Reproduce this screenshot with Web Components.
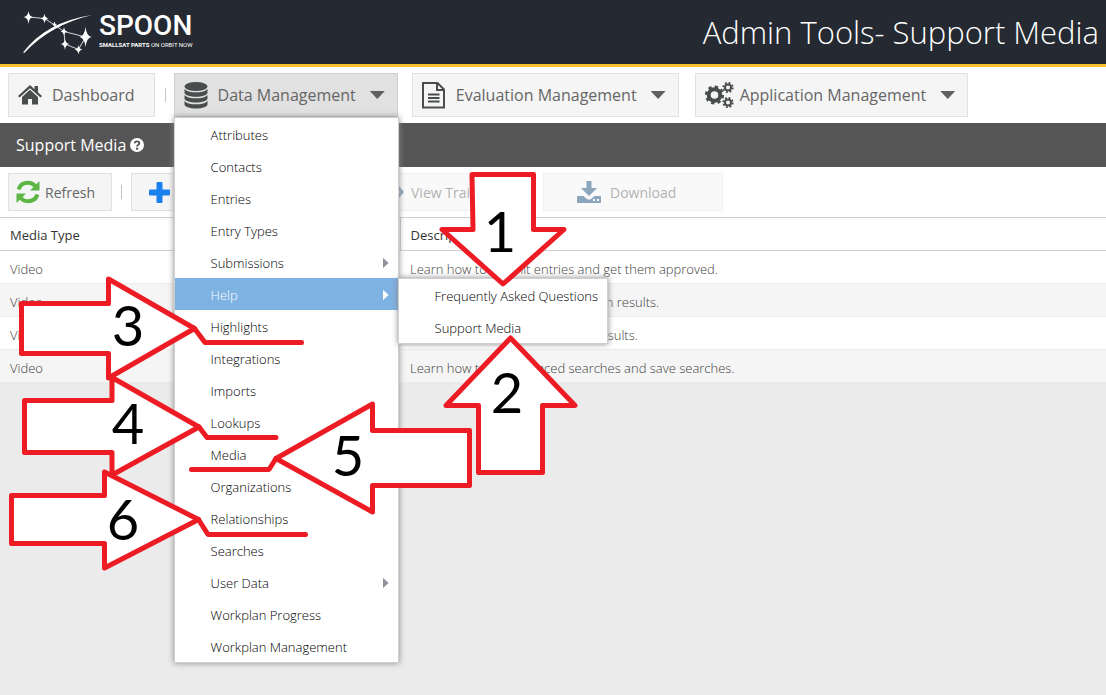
<!DOCTYPE html>
<html lang="en">
<head>
<meta charset="utf-8">
<title>Admin Tools - Support Media</title>
<style>
  html, body { margin: 0; min-height: 100%; background: #ebebeb; }
  body { font: 13px/16px "Open Sans", "Noto Sans", sans-serif; color: #404040; }
</style>
</head>
<body>
<admin-page></admin-page>

<template id="t-page">
  <style>
    :host { display: block; position: relative; min-height: 100vh; }
    nav, .tools { display: flex; align-items: center; background: #fff; }
    nav { height: 56px; padding: 0 8px; position: relative; z-index: 2; }
    .tools { height: 50px; padding: 0 8px; gap: 9px; }
    .sep { width: 1px; height: 14px; background: #c4c4c4; flex: none; }
    nav .sep { margin: 0 8px 0 10px; }
    .anchor { position: relative; margin-right: 14px; }
    .anchor + nav-button { margin-right: 16px; }
  </style>
  <app-header></app-header>
  <nav aria-label="Admin tools">
    <nav-button plain>
      <svg slot="icon" width="24" height="20" viewBox="0 0 24 20" fill="#4a4d4e"><path d="M12 0 0 11l1.500 1.600L12 3.200l10.500 9.400L24 11l-4-3.700V1h-3.500v3.200z"/><path d="M12 4.800 4 12v7.500h6V14h4v5.500h6V12z"/></svg>
      Dashboard</nav-button>
    <span class="sep"></span>
    <div class="anchor">
      <nav-button open>
        <svg slot="icon" width="24" height="27" viewBox="0 0 24 27" fill="#4a4d4e"><ellipse cx="12" cy="4.500" rx="11.500" ry="4.500"/><path d="M.5 7c2 2.500 6.500 3.300 11.500 3.300S21.500 9.500 23.500 7v3.500c0 2.500-5 4.300-11.500 4.300S.5 13 .5 10.500z"/><path d="M.5 13c2 2.500 6.500 3.300 11.500 3.300s9.500-.8 11.500-3.300v3.300c0 2.500-5 4.300-11.500 4.300S.5 18.800.5 16.300z"/><path d="M.5 19c2 2.500 6.500 3.300 11.500 3.300s9.500-.8 11.500-3.300v3.300C23.500 24.800 18.500 26.600 12 26.600S.5 24.800.5 22.300z"/></svg>
        Data Management</nav-button>
      <drop-menu>
        <menu-item>Attributes</menu-item>
        <menu-item>Contacts</menu-item>
        <menu-item>Entries</menu-item>
        <menu-item>Entry Types</menu-item>
        <menu-item more>Submissions</menu-item>
        <menu-item more active>Help
          <drop-menu slot="sub" sub>
            <menu-item>Frequently Asked Questions</menu-item>
            <menu-item>Support Media</menu-item>
          </drop-menu>
        </menu-item>
        <menu-item>Highlights</menu-item>
        <menu-item>Integrations</menu-item>
        <menu-item>Imports</menu-item>
        <menu-item>Lookups</menu-item>
        <menu-item>Media</menu-item>
        <menu-item>Organizations</menu-item>
        <menu-item>Relationships</menu-item>
        <menu-item>Searches</menu-item>
        <menu-item more>User Data</menu-item>
        <menu-item>Workplan Progress</menu-item>
        <menu-item>Workplan Management</menu-item>
      </drop-menu>
    </div>
    <nav-button>
      <svg slot="icon" width="24" height="27" viewBox="0 0 24 27" fill="none" stroke="#4a4d4e" stroke-width="2"><path d="M2 1h13.500L22 7.500V25.500H1V1zM15 1v7h7"/><path d="M6 12.500h11.500M6 16h11.500M6 19.500h11.500"/></svg>
      Evaluation Management</nav-button>
    <nav-button wide-icon>
      <svg slot="icon" width="29" height="26" viewBox="0 0 29 26" fill="none" stroke="#4a4d4e"><circle cx="9.500" cy="13" r="5.800" stroke-width="4"/><circle cx="9.500" cy="13" r="8.300" stroke-width="2.600" stroke-dasharray="3.300 3.220"/><circle cx="23" cy="5.500" r="3" stroke-width="2"/><circle cx="23" cy="5.500" r="4.700" stroke-width="1.800" stroke-dasharray="1.900 1.790"/><circle cx="23" cy="20.500" r="3" stroke-width="2"/><circle cx="23" cy="20.500" r="4.700" stroke-width="1.800" stroke-dasharray="1.900 1.790"/></svg>
      Application Management</nav-button>
  </nav>
  <title-bar>Support Media</title-bar>
  <div class="tools">
    <tool-button style="--w:104px;--gap:5px">
      <svg slot="icon" width="24" height="24" viewBox="0 0 24 24" fill="none" stroke="#5cb646" stroke-width="4"><path d="M2.500 9.500C4 5 8 2.800 12 2.800c3 0 5.500 1.200 7.300 3.200M21.500 14.500c-1.500 4.500-5.500 6.700-9.500 6.700-3 0-5.500-1.200-7.300-3.200"/><path fill="#5cb646" stroke="none" d="M23.500 1v9.500H14zM.5 23v-9.500H10z"/></svg>
      Refresh</tool-button>
    <span class="sep"></span>
    <tool-button label="Add" style="--w:100px;--pad:17px">
      <svg slot="icon" width="21" height="21" viewBox="0 0 21 21" fill="#1a80ee"><path d="M7.500 1q0-1 1-1h4q1 0 1 1v6.500H20q1 0 1 1v4q0 1-1 1h-6.500V20q0 1-1 1h-4q-1 0-1-1v-6.500H1q-1 0-1-1v-4q0-1 1-1h6.500z"/></svg>
    </tool-button>
    <tool-button label="Edit" disabled style="--w:102px;--pad:17px">
      <svg slot="icon" width="20" height="20" viewBox="0 0 20 20" fill="#1b4f7d"><path d="m0 20 1-6L14 1l5 5L6 19z"/></svg>
    </tool-button>
    <tool-button disabled style="--w:183px;--pad:24px;--gap:7px">
      <svg slot="icon" width="28" height="18" viewBox="0 0 28 18" fill="none" stroke="#1b4f7d" stroke-width="3"><path d="M2 9 8 2h12l6 7-6 7H8z"/><circle cx="14" cy="9" r="3"/></svg>
      View Training</tool-button>
    <tool-button disabled style="--w:180px;--pad:33px;--gap:9px">
      <svg slot="icon" width="24" height="24" viewBox="0 0 24 24" fill="#1b4f7d"><path d="M9.500 1h5v7H20l-8 8-8-8h5.500z"/><path fill-rule="evenodd" d="M1 16h5.500l3.500 3q2 1 4 0l3.500-3H23q1 0 1 1v5q0 1-1 1H1q-1 0-1-1v-5q0-1 1-1zm15 3v2h2v-2zm4 0v2h2v-2z"/></svg>
      Download</tool-button>
  </div>
  <media-table></media-table>
  <arrow-notes></arrow-notes>
</template>

<template id="t-header">
  <style>
    :host { display: flex; justify-content: space-between; align-items: center; height: 64px; padding: 0 7px 0 22px; background: #252931; border-bottom: 3px solid #fdc12d; color: #fff; }
    .logo { display: flex; gap: 6px; align-items: center; color: #fff; text-decoration: none; }
    .mark { display: block; }
    .words { display: grid; padding-bottom: 4px; }
    .name { font: 500 28px/30px Roboto, sans-serif; }
    .tag { font: 6px/8px Roboto, sans-serif; white-space: nowrap; }
    h1 { margin: 0; font-size: 31px; line-height: 40px; font-weight: 300; white-space: nowrap; }
  </style>
  <a class="logo" href="#">
    <svg class="mark" width="71" height="46" viewBox="22 9 71 46" fill="#fff"><path d="M23 52.500Q46 22 92 15 50 25 24.500 52.800z"/><path fill="none" stroke="#fff" stroke-width=".8" d="m28.500 17 16 1.500 9.500 6 10 7 21.500 5.500-7 12.500L65 44l-1-12.500"/><path d="M28.500 11q.5 5.500 4.500 6-4 .5-4.500 7-.5-6.500-5-7 4.500-.5 5-6zM44.500 13.500q.5 4.500 4 5-3.500.5-4 5-.5-4.500-4-5 3.500-.5 4-5zM54.500 21.500q.3 2.500 2.500 3-2.200.5-2.500 3-.3-2.500-2.500-3 2.200-.5 2.500-3zM64 27q.5 4 3.500 4.500-3 .5-3.500 4-.5-3.500-3.500-4 3-.5 3.500-4.500zM85.500 27q1 9 6 10-5 1-6 10-1-9-6-10 5-1 6-10zM65 39q.5 4.500 4.500 5-4 .5-4.500 6-.5-5.500-4.500-6 4-.5 4.500-5zM78.500 45q.5 4 4 4.500-3.500.5-4 5-.5-4.500-4-5 3.500-.5 4-4.500z"/></svg>
    <span class="words"><span class="name">SPOON</span><span class="tag"><b>SMALLSAT PARTS</b> ON ORBIT NOW</span></span>
  </a>
  <h1>Admin Tools- Support Media</h1>
</template>

<template id="t-nav-button">
  <style>
    :host { display: block; flex: none; }
    button { display: flex; align-items: center; box-sizing: border-box; height: 44px; margin: 0; padding: 0 12px 0 9px; gap: 10px; border: 1px solid #e1e1e1; background: #f5f5f5; color: #666; font: inherit; font-size: 16px; white-space: nowrap; }
    :host([plain]) button { padding-right: 19px; }
    :host([plain]) .caret { display: none; }
    :host([open]) button { background: #e1e1e1; border-color: #cfcfcf; }
    :host([wide-icon]) button { gap: 6px; }
    .caret { width: 15px; height: 8px; background: #606060; clip-path: polygon(0 0, 100% 0, 50% 100%); margin-left: 4px; }
    :host([wide-icon]) .caret { margin-left: 8px; }
    ::slotted(svg) { display: block; }
  </style>
  <button type="button"><slot name="icon"></slot><span><slot></slot></span><span class="caret"></span></button>
</template>

<template id="t-menu">
  <style>
    :host { display: block; position: absolute; top: 100%; left: 0; z-index: 3; box-sizing: border-box; width: 225px; background: #fff; border: 1px solid #cfcfcf; box-shadow: 0 0 6px #888; }
    :host([sub]) { top: 0; left: 100%; width: 210px; }
  </style>
  <slot></slot>
</template>

<template id="t-item">
  <style>
    :host { display: block; position: relative; }
    a { display: flex; align-items: center; justify-content: space-between; box-sizing: border-box; height: 32px; padding: 2px 9px 0 36px; color: #000; text-decoration: none; white-space: nowrap; font-size: 13px; font-weight: 300; }
    :host([active]) > a { background: #7eb2e3; color: #fff; }
    .more { display: none; width: 6px; height: 11px; background: #8f929a; clip-path: polygon(0 0, 100% 50%, 0 100%); }
    :host([more]) .more { display: block; }
    :host([active]) .more { background: #fff; }
  </style>
  <a href="#"><span><slot></slot></span><span class="more"></span></a>
  <slot name="sub"></slot>
</template>

<template id="t-title">
  <style>
    :host { display: flex; align-items: center; gap: 4px; height: 44px; padding: 0 16px; background: #555; color: #fefefe; }
    h2 { margin: 0; font-size: 16px; line-height: 20px; font-weight: 400; }
    button { display: block; padding: 0; border: 0; background: none; }
    svg { display: block; }
  </style>
  <h2><slot></slot></h2>
  <button type="button" aria-label="Help"><svg width="14" height="14" viewBox="0 0 14 14"><circle cx="7" cy="7" r="7" fill="#fff"/><path d="M4.800 5.300C4.900 2.800 9.300 2.800 9.300 5.200 9.300 6.800 7.100 6.700 7.100 8.600" fill="none" stroke="#555" stroke-width="1.900"/><path d="M6 9.700h2.200v2H6z" fill="#555"/></svg></button>
</template>

<template id="t-tool">
  <style>
    :host { display: block; flex: none; width: var(--w); }
    button { display: flex; align-items: center; gap: var(--gap, 8px); box-sizing: border-box; width: 100%; height: 38px; margin: 0; padding: 0 0 0 var(--pad, 7px); border: 1px solid #e1e1e1; background: #f5f5f5; color: #666; font: inherit; font-size: 14px; white-space: nowrap; }
    button:disabled { opacity: .5; }
    .label { padding-top: 2px; }
    ::slotted(svg) { display: block; }
  </style>
  <button type="button"><slot name="icon"></slot><span class="label"><slot></slot></span></button>
</template>

<template id="t-table">
  <style>
    :host { display: block; background: #fff; }
    table { width: 100%; border-collapse: collapse; table-layout: fixed; }
    th, td { box-sizing: border-box; height: 33px; padding: 3px 10px 0; text-align: left; font-weight: 400; white-space: nowrap; overflow: hidden; }
    th { padding-top: 1px; border: solid #cfcfcf; border-width: 1px 0; color: #333; }
    th + th { border-left-width: 1px; }
    td { border-bottom: 1px solid #ebebeb; color: #404040; font-weight: 300; }
    tr:nth-child(even) td { background: #f5f5f5; }
    .type { width: 175px; } .name { width: 225px; }
  </style>
  <table>
    <colgroup><col class="type"><col class="name"><col></colgroup>
    <thead><tr><th>Media Type</th><th></th><th>Description</th></tr></thead>
    <tbody>
      <tr><td>Video</td><td></td><td>Learn how to submit entries and get them approved.</td></tr>
      <tr><td>Video</td><td></td><td>Learn how to view and filter search results.</td></tr>
      <tr><td>Video</td><td></td><td>Learn how to search and refine results.</td></tr>
      <tr><td>Video</td><td></td><td>Learn how to do advanced searches and save searches.</td></tr>
    </tbody>
  </table>
</template>

<template id="t-notes">
  <style>
    :host { display: block; position: absolute; top: 0; left: 0; z-index: 5; pointer-events: none; }
    svg { display: block; }
    text { font: 56px Lato, sans-serif; fill: #000; text-anchor: middle; }
  </style>
  <svg width="600" height="600" viewBox="0 0 600 600">
    <g fill="#fff" stroke="#ed1c24" stroke-width="5" stroke-linejoin="round">
      <path d="M472 174.500h61.500v55H564L503 284l-61-54.500h31z"/>
      <path d="M510.500 338 575 405.500h-32.500v67h-64v-67H446z"/>
      <path d="M108.500 279v24.500h-87v50h87V378l86-49.500z"/>
      <path d="M112 377.500v23H24.500v52H112V475l87-48z"/>
      <path d="M372.500 404v26.500h97v55h-97V512L276 458.500z"/>
      <path d="M104.500 472v23.500h-93v48h93V568l94-48.500z"/>
    </g>
    <g fill="none" stroke="#ed1c24" stroke-width="5" stroke-linejoin="round" stroke-linecap="round">
      <path d="m194.500 328.500 10.500 14h96.500M199 427l8 10.500h69M276 458.500l-7 11h-77.500M198.500 519.500l9.500 15h97.500"/>
    </g>
    <text x="500" y="252">1</text>
    <text x="507" y="413">2</text>
    <text x="128" y="346">3</text>
    <text x="128" y="444">4</text>
    <text x="348" y="476">5</text>
    <text x="123" y="540">6</text>
  </svg>
</template>

<script>
  class TemplateElement extends HTMLElement {
    constructor() {
      super();
      const root = this.attachShadow({ mode: "open" });
      root.append(document.getElementById(this.constructor.template).content.cloneNode(true));
    }
  }
  customElements.define("app-header", class AppHeader extends TemplateElement { static template = "t-header"; });
  customElements.define("nav-button", class NavButton extends TemplateElement { static template = "t-nav-button"; });
  customElements.define("drop-menu", class DropMenu extends TemplateElement { static template = "t-menu"; });
  customElements.define("menu-item", class MenuItem extends TemplateElement { static template = "t-item"; });
  customElements.define("title-bar", class TitleBar extends TemplateElement { static template = "t-title"; });
  customElements.define("tool-button", class ToolButton extends TemplateElement {
    static template = "t-tool";
    connectedCallback() {
      const button = this.shadowRoot.querySelector("button");
      button.disabled = this.hasAttribute("disabled");
      if (this.hasAttribute("label")) button.setAttribute("aria-label", this.getAttribute("label"));
    }
  });
  customElements.define("media-table", class MediaTable extends TemplateElement { static template = "t-table"; });
  customElements.define("arrow-notes", class ArrowNotes extends TemplateElement { static template = "t-notes"; });
  customElements.define("admin-page", class AdminPage extends TemplateElement { static template = "t-page"; });
</script>
</body>
</html>
